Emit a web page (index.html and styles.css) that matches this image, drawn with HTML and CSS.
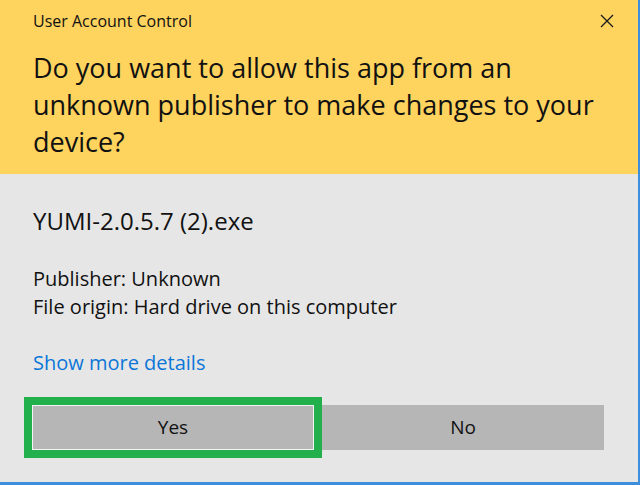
FILE: index.html
```html
<!DOCTYPE html>
<html>
<head>
<meta charset="utf-8">
<link rel="stylesheet" href="styles.css">
</head>
<body>
<div class="dialog">
  <div class="header">
    <div class="titlebar">
      <span class="title">User Account Control</span>
      <svg class="close" width="14" height="14" viewBox="0 0 14 14"><path d="M1 1L13 13M13 1L1 13" stroke="#1a1a1a" stroke-width="1.3" fill="none"/></svg>
    </div>
    <div class="question">Do you want to allow this app from an unknown publisher to make changes to your device?</div>
  </div>
  <div class="content">
    <div class="appname">YUMI-2.0.5.7 (2).exe</div>
    <div class="info">
      <div>Publisher: Unknown</div>
      <div>File origin: Hard drive on this computer</div>
    </div>
    <div class="link">Show more details</div>
    <div class="buttons">
      <div class="btn yes">Yes</div>
      <div class="btn">No</div>
    </div>
  </div>
</div>
</body>
</html>
```
FILE: styles.css
```css
html, body {
  margin: 0;
  padding: 0;
}
body {
  width: 640px;
  height: 485px;
  overflow: hidden;
  font-family: "Open Sans", "Noto Sans", sans-serif;
  color: #111;
}
.dialog {
  width: 640px;
  height: 485px;
  box-sizing: border-box;
  border-right: 2px solid #3d8fdd;
  border-bottom: 3px solid #3d8fdd;
  background: #e6e6e6;
  display: flex;
  flex-direction: column;
}
.header {
  background: #fed35e;
  height: 174px;
  box-sizing: border-box;
  padding: 0 0 0 33px;
}
.titlebar {
  display: flex;
  justify-content: space-between;
  align-items: center;
  height: 42px;
  padding-right: 24px;
}
.title {
  font-size: 16px;
  line-height: 42px;
}
.close {
  display: block;
}
.question {
  font-size: 27px;
  line-height: 37px;
  width: 598px;
  margin-top: 7px;
}
.content {
  padding: 27px 33px 0 33px;
}
.appname {
  font-size: 24px;
  line-height: 40px;
}
.info {
  margin-top: 24px;
  font-size: 20px;
  line-height: 28px;
}
.link {
  margin-top: 28px;
  font-size: 20px;
  line-height: 28px;
  color: #0b76d8;
}
.buttons {
  display: grid;
  grid-template-columns: 1fr 1fr;
  gap: 8px;
  margin: 28px 1px 0 -1px;
}
.btn {
  background: #b6b6b6;
  height: 45px;
  line-height: 45px;
  text-align: center;
  font-size: 19px;
  box-sizing: border-box;
}
.yes {
  border: 1px solid #f4f4f4;
  line-height: 43px;
  outline: 8px solid #21b04b;
}
```
